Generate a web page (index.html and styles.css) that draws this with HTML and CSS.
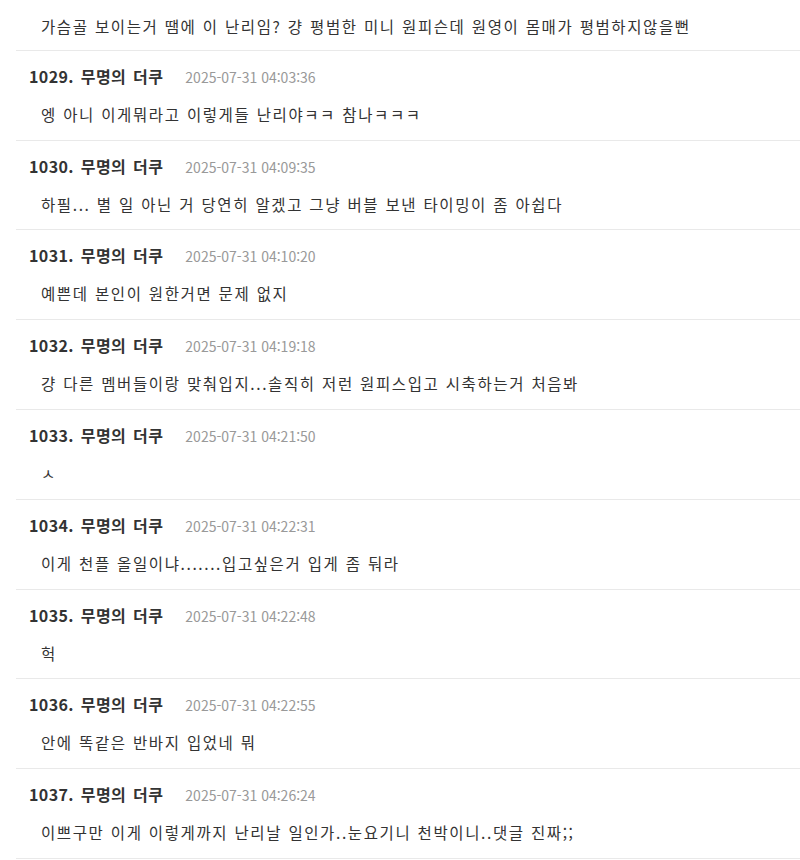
FILE: index.html
```html
<!DOCTYPE html>
<html lang="ko">
<head>
<meta charset="utf-8">
<link rel="stylesheet" href="styles.css">
</head>
<body>
<div class="list">
  <div class="item first">
    <p class="body">가슴골 보이는거 땜에 이 난리임? 걍 평범한 미니 원피슨데 원영이 몸매가 평범하지않을뻔</p>
  </div>
  <div class="item">
    <div class="head"><span class="name">1029. 무명의 더쿠</span><span class="date">2025-07-31 04:03:36</span></div>
    <p class="body">엥 아니 이게뭐라고 이렇게들 난리야ㅋㅋ 참나ㅋㅋㅋ</p>
  </div>
  <div class="item">
    <div class="head"><span class="name">1030. 무명의 더쿠</span><span class="date">2025-07-31 04:09:35</span></div>
    <p class="body">하필... 별 일 아닌 거 당연히 알겠고 그냥 버블 보낸 타이밍이 좀 아쉽다</p>
  </div>
  <div class="item">
    <div class="head"><span class="name">1031. 무명의 더쿠</span><span class="date">2025-07-31 04:10:20</span></div>
    <p class="body">예쁜데 본인이 원한거면 문제 없지</p>
  </div>
  <div class="item">
    <div class="head"><span class="name">1032. 무명의 더쿠</span><span class="date">2025-07-31 04:19:18</span></div>
    <p class="body">걍 다른 멤버들이랑 맞춰입지...솔직히 저런 원피스입고 시축하는거 처음봐</p>
  </div>
  <div class="item">
    <div class="head"><span class="name">1033. 무명의 더쿠</span><span class="date">2025-07-31 04:21:50</span></div>
    <p class="body">ㅅ</p>
  </div>
  <div class="item">
    <div class="head"><span class="name">1034. 무명의 더쿠</span><span class="date">2025-07-31 04:22:31</span></div>
    <p class="body">이게 천플 올일이냐.......입고싶은거 입게 좀 둬라</p>
  </div>
  <div class="item">
    <div class="head"><span class="name">1035. 무명의 더쿠</span><span class="date">2025-07-31 04:22:48</span></div>
    <p class="body">헉</p>
  </div>
  <div class="item">
    <div class="head"><span class="name">1036. 무명의 더쿠</span><span class="date">2025-07-31 04:22:55</span></div>
    <p class="body">안에 똑같은 반바지 입었네 뭐</p>
  </div>
  <div class="item">
    <div class="head"><span class="name">1037. 무명의 더쿠</span><span class="date">2025-07-31 04:26:24</span></div>
    <p class="body">이쁘구만 이게 이렇게까지 난리날 일인가..눈요기니 천박이니..댓글 진짜;;</p>
  </div>
</div>
</body>
</html>
```

FILE: styles.css
```css
html, body {
  margin: 0;
  padding: 0;
  background: #fff;
}
body {
  font-family: "Noto Sans CJK KR", "Noto Sans", sans-serif;
  color: #333;
  overflow: hidden;
}
.list {
  margin-left: 16px;
}
.item {
  padding: 13px 0 13.8px 13px;
  border-bottom: 1px solid #e9e9e9;
}
.item.first {
  padding-top: 14px;
  padding-bottom: 11.8px;
}
.head {
  display: flex;
  align-items: baseline;
  gap: 22px;
  height: 24px;
  line-height: 24px;
  margin-bottom: 14px;
}
.name {
  font-size: 16px;
  font-weight: 700;
  color: #333;
  letter-spacing: 0.4px;
  word-spacing: 2px;
}
.date {
  font-size: 14px;
  color: #999;
}
.body {
  margin: 0;
  padding-left: 12px;
  font-size: 15.5px;
  line-height: 24px;
  color: #333;
  letter-spacing: 1.6px;
  word-spacing: 0.4px;
  white-space: nowrap;
}
```
